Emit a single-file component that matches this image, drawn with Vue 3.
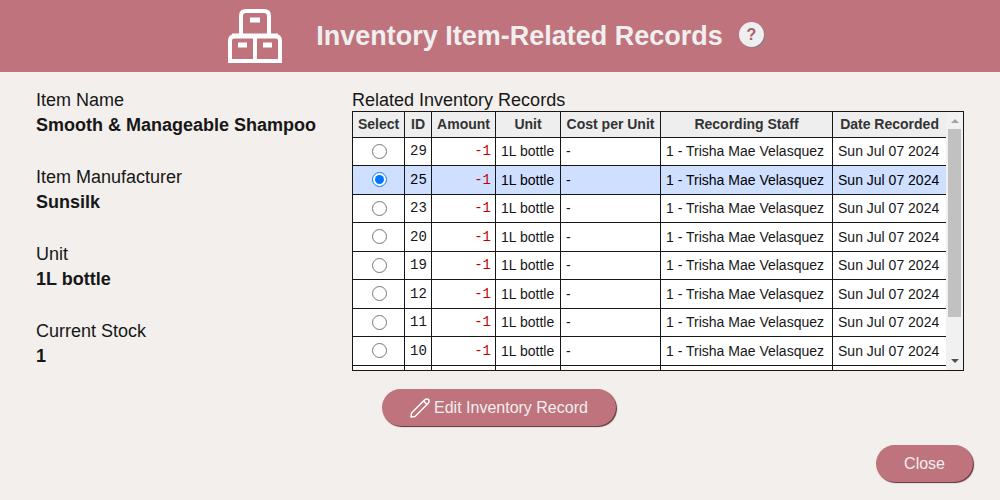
<script setup>
import { ref } from 'vue'

const details = [
  { label: 'Item Name', value: 'Smooth & Manageable Shampoo' },
  { label: 'Item Manufacturer', value: 'Sunsilk' },
  { label: 'Unit', value: '1L bottle' },
  { label: 'Current Stock', value: '1' },
]

const columns = [
  { key: 'select', title: 'Select' },
  { key: 'id', title: 'ID' },
  { key: 'amount', title: 'Amount' },
  { key: 'unit', title: 'Unit' },
  { key: 'cost', title: 'Cost per Unit' },
  { key: 'staff', title: 'Recording Staff' },
  { key: 'date', title: 'Date Recorded' },
]

const records = [29, 25, 23, 20, 19, 12, 11, 10].map((id) => ({
  id,
  amount: '-1',
  unit: '1L bottle',
  cost: '-',
  staff: '1 - Trisha Mae Velasquez',
  date: 'Sun Jul 07 2024',
}))

const selected = ref(25)
</script>

<template>
  <div class="page">
    <header class="banner">
      <svg class="logo" viewBox="0 0 54 54" fill="none" stroke="#fff" stroke-width="4" aria-hidden="true">
        <path d="M13 26V7q0-5 5-5h18q5 0 5 5v19" />
        <path d="M2 52V32q0-5 5-5h40q5 0 5 5v20z" />
        <path d="M27 26v26" stroke-width="4" />
        <path d="M4 27h46" stroke-width="5" />
        <path d="M22 11h10M10 36h9M35 36h9" stroke-width="5" />
      </svg>
      <h1>Inventory Item-Related Records</h1>
      <button class="help" type="button" aria-label="Help">?</button>
    </header>

    <main class="content">
      <dl class="details">
        <div v-for="d in details" :key="d.label" class="detail">
          <dt>{{ d.label }}</dt>
          <dd>{{ d.value }}</dd>
        </div>
      </dl>

      <section class="related">
        <h2 id="related-title">Related Inventory Records</h2>
        <div class="frame">
          <div class="viewport">
            <table aria-labelledby="related-title">
              <colgroup>
                <col v-for="c in columns" :key="c.key" :class="'col-' + c.key" />
              </colgroup>
              <thead>
                <tr>
                  <th v-for="c in columns" :key="c.key" scope="col">{{ c.title }}</th>
                </tr>
              </thead>
              <tbody>
                <tr v-for="r in records" :key="r.id" :class="{ active: r.id === selected }">
                  <td class="pick">
                    <input v-model="selected" type="radio" name="record" :value="r.id" :aria-label="'Select record ' + r.id" />
                  </td>
                  <td class="mono">{{ r.id }}</td>
                  <td class="mono amount">{{ r.amount }}</td>
                  <td>{{ r.unit }}</td>
                  <td>{{ r.cost }}</td>
                  <td>{{ r.staff }}</td>
                  <td>{{ r.date }}</td>
                </tr>
                <tr aria-hidden="true">
                  <td v-for="c in columns" :key="c.key"></td>
                </tr>
              </tbody>
            </table>
          </div>
          <div class="scrollbar" aria-hidden="true">
            <svg viewBox="0 0 17 17"><path d="M5 11l4-4 4 4z" fill="#a3a3a3" /></svg>
            <div class="track"><div class="thumb"></div></div>
            <svg viewBox="0 0 17 17"><path d="M5 6l4 4 4-4z" fill="#505050" /></svg>
          </div>
        </div>
        <button class="pill edit" type="button">
          <svg viewBox="0 0 20 20" fill="none" stroke="#fff" stroke-width="1.5" stroke-linejoin="round" aria-hidden="true">
            <path d="M1 19L1.500 15L14.500 2Q16.500 .2 18.500 1.500Q19.800 3.500 18 5.500L5 18.500Z" />
            <path d="M13.500 3l3.500 3.500" />
          </svg>
          Edit Inventory Record
        </button>
      </section>
    </main>

    <footer class="actions">
      <button class="pill close" type="button">Close</button>
    </footer>
  </div>
</template>

<style>
body {
  margin: 0;
  background: #f2efec;
}
</style>

<style scoped>
.page {
  display: flex;
  flex-direction: column;
  min-height: 100vh;
  box-sizing: border-box;
  background: #f2efec;
  color: #171717;
  font: 18px/24px "Liberation Sans", Arial, sans-serif;
}

.banner {
  display: flex;
  align-items: center;
  justify-content: center;
  height: 72px;
  padding-right: 8px;
  background: #bf747d;
}

.logo {
  width: 54px;
  height: 54px;
  margin-right: 34px;
}

h1 {
  margin: 0 16px 0 0;
  color: #efefef;
  font-size: 27px;
  line-height: 32px;
}

.help {
  width: 25px;
  height: 25px;
  padding: 0;
  margin-bottom: 4px;
  border: 0;
  border-radius: 50%;
  background: #efefef;
  box-shadow: 1px 1px 1px #8a8084;
  color: #a4616b;
  font: bold 16px/25px "Liberation Sans", Arial, sans-serif;
}

.content {
  display: flex;
  gap: 36px;
  padding: 16px 36px 0;
}

.details {
  display: flex;
  flex-direction: column;
  gap: 27px;
  margin: 0;
  flex: 0 0 280px;
}

.detail {
  line-height: 25px;
  white-space: nowrap;
}

dd {
  margin: 0;
  font-weight: bold;
}

h2 {
  margin: 0;
  padding-top: 2px;
  font-size: 18px;
  font-weight: normal;
  line-height: 21px;
}

.related {
  display: flex;
  flex-direction: column;
  align-items: flex-start;
}

.frame {
  display: flex;
  height: 258px;
  border: 1px solid #171717;
  background: #fff;
}

.viewport {
  overflow: hidden;
}

table {
  width: 593px;
  table-layout: fixed;
  border-collapse: separate;
  border-spacing: 0;
  font-size: 14px;
  line-height: 16px;
}

.col-select { width: 52px; }
.col-id { width: 27px; }
.col-amount { width: 64px; }
.col-unit { width: 65px; }
.col-cost { width: 100px; }
.col-staff { width: 172px; }
.col-date { width: 113px; }

th,
td {
  box-sizing: border-box;
  padding: 0 4px 1px 5px;
  border-right: 1px solid #171717;
  border-bottom: 1px solid #171717;
  white-space: nowrap;
}

th:last-child,
td:last-child {
  border-right: 0;
}

th {
  height: 26px;
  padding: 0 0 1px;
  background: #eee;
  color: #333;
}

td {
  height: 28px;
}

tr:nth-child(even) td {
  height: 29px;
}

.active td {
  background: #cfdfff;
  color: #000;
}

.pick {
  text-align: center;
}

.pick input {
  display: block;
  width: 15px;
  height: 15px;
  margin: 0 auto;
}

.mono {
  font-family: "Liberation Mono", "Courier New", monospace;
}

.amount,
.active .amount {
  color: #c00000;
  text-align: right;
}

.scrollbar {
  display: flex;
  flex-direction: column;
  width: 17px;
  background: #f1f1f1;
}

.scrollbar svg {
  width: 17px;
  height: 17px;
}

.track {
  flex: 1;
  padding: 0 2px;
}

.thumb {
  height: 84%;
  background: #c1c1c1;
}

.pill {
  display: flex;
  align-items: center;
  justify-content: center;
  height: 37px;
  border: 0;
  border-radius: 19px;
  background: #bf747d;
  box-shadow: 1px 1px 1px #5c2c36;
  color: #efefef;
  font: 16px/20px "Liberation Sans", Arial, sans-serif;
}

.edit {
  gap: 4px;
  margin: 18px 0 0 30px;
  padding: 0 28px;
}

.edit svg {
  width: 20px;
  height: 20px;
}

.actions {
  display: flex;
  justify-content: flex-end;
  padding: 19px 27px 18px;
}

.close {
  padding: 0 28px;
}
</style>
